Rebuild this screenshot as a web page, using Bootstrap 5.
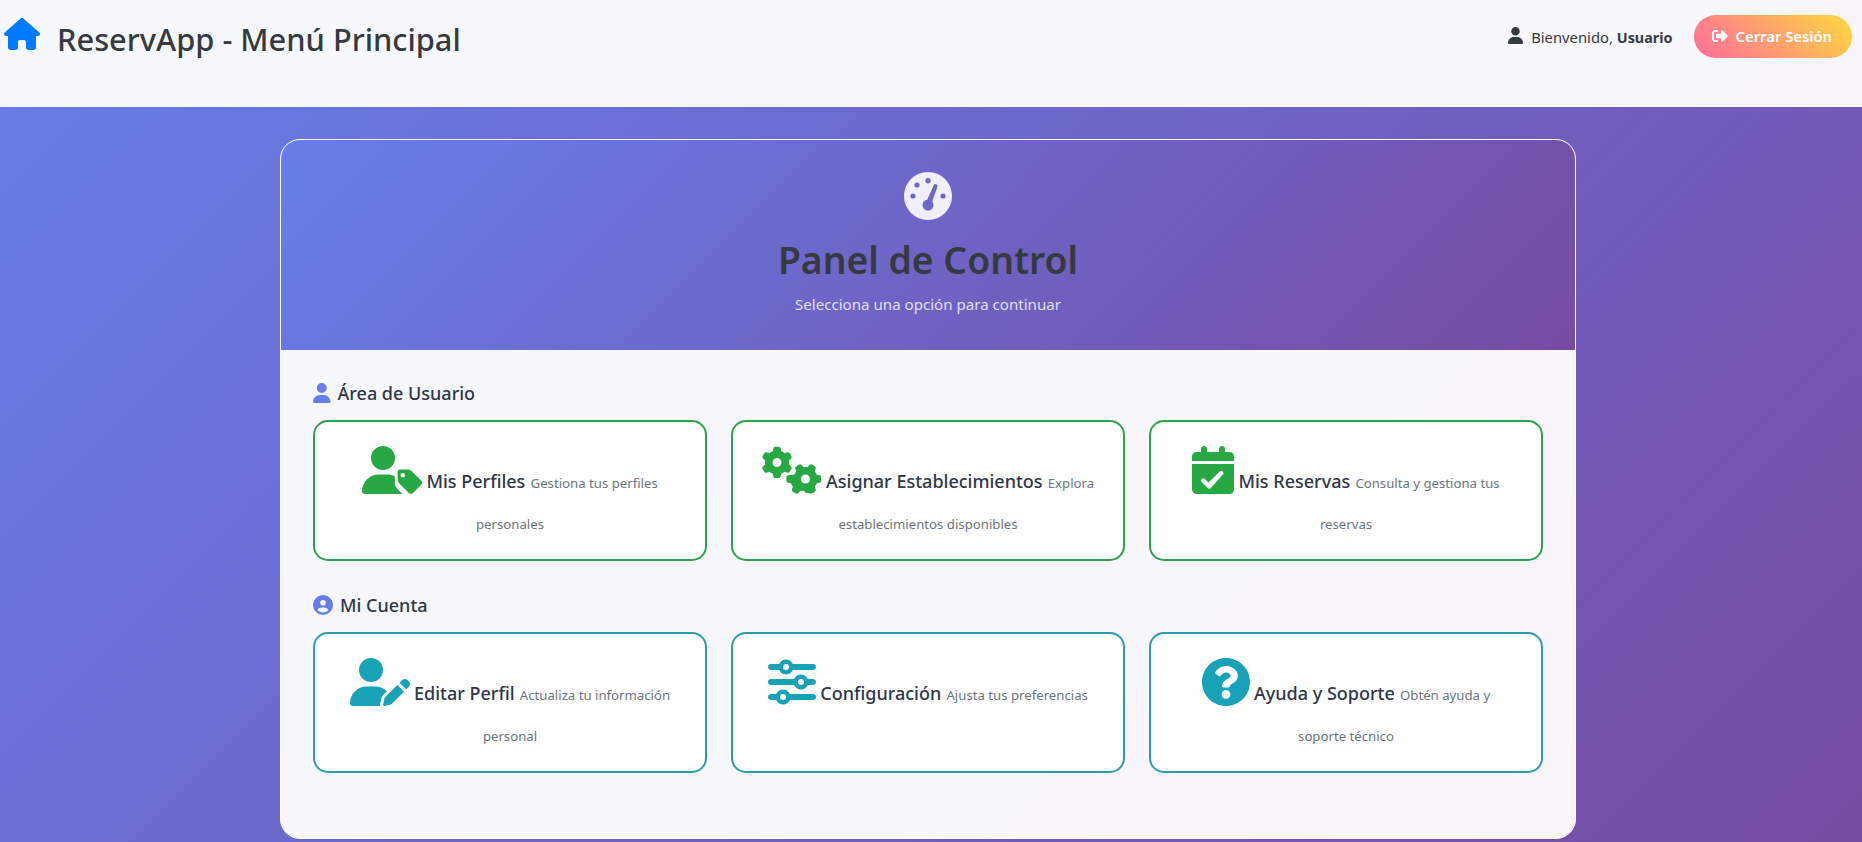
<!DOCTYPE html>
<html lang="es">
<head>
<meta charset="utf-8">
<title>ReservApp</title>
<link href="https://cdn.jsdelivr.net/npm/bootstrap@5.3.0/dist/css/bootstrap.min.css" rel="stylesheet">
<style>
html,body{height:842px;overflow:hidden}
body{font-family:"Noto Sans","Open Sans",sans-serif;background:linear-gradient(135deg,#667eea 0%,#764ba2 100%);color:#212529}
.topbar{height:107px;background:rgba(255,255,255,.95);padding:15px 10px 0 4px;align-items:flex-start}
.brandmark{color:#343a40;font-size:30.8px;font-weight:500;line-height:46px;text-decoration:none;margin-top:1px}
.brandmark svg{width:36px;height:32px;fill:#007bff;margin-right:17px;vertical-align:1px}
.greet{font-size:14.8px;color:#343a40;margin-right:21px;line-height:45px}
.greet svg{width:15px;height:17px;fill:#343a40;margin-right:8px;vertical-align:-1px}
.greet b{font-weight:700;font-size:14.4px}
.logout{height:43px;border-radius:25px;border:0;padding:0 20px 0 18px;color:#fff;font-weight:600;font-size:14.8px;background:linear-gradient(45deg,#ff6b9d,#ffd93d)}
.logout:hover{color:#fff}
.logout svg{width:16px;height:16px;fill:#fff;margin-right:8px;vertical-align:-2px}
.panel{width:1296px;margin:32px 0 0 280px;height:700px;border-radius:20px;border:1px solid #fff;background:rgba(255,255,255,.95);overflow:hidden}
.panelhead{height:210px;padding-top:32px;background:linear-gradient(135deg,#667eea,#764ba2);text-align:center}
.panelhead svg{width:48px;height:48px;display:block;margin:0 auto 10px}
.panelhead h1{font-size:37.3px;font-weight:600;color:#343a40;line-height:60px;margin:0 0 3px}
.panelhead p{font-size:15.1px;color:rgba(255,255,255,.8);margin:0}
.panelbody{padding:29px 32px 0}
.sectitle{font-size:18px;font-weight:500;color:#2d3748;line-height:28px;margin:0 0 13px 0}
.sectitle svg{fill:#667eea;height:20px;vertical-align:-3px;margin-right:7px}
.sectitle.second{margin-top:30px}
.actioncard{display:block;height:100%;background:#fff;border:2px solid #2ca24e;border-radius:15px;padding:24px 24px 15px;text-align:center;line-height:40px;text-decoration:none;font-size:16px}
.actioncard.teal{border-color:#2a9cae}
.actioncard svg{height:48px;fill:#28a745;vertical-align:-6px}
.actioncard.teal svg{fill:#17a2b8}
.cardname{font-size:18px;font-weight:500;color:#2d3748}
.carddesc{font-size:13.2px;color:#6c757d;margin-left:1px}
.cardsrow{--bs-gutter-x:24px;margin-left:-12px;margin-right:-12px}
</style>
</head>
<body>
<nav class="navbar topbar d-flex justify-content-between">
  <a class="brandmark" href="#"><svg viewBox="0 0 576 512"><path d="M575.8 255.5c0 18-15 32.1-32 32.1h-32l.7 160.2c0 2.7-.2 5.4-.5 8.1V472c0 22.1-17.9 40-40 40H456c-1.1 0-2.2 0-3.3-.1c-1.4 .1-2.8 .1-4.2 .1H416 392c-22.1 0-40-17.9-40-40V448 384c0-17.7-14.3-32-32-32H256c-17.7 0-32 14.3-32 32v64 24c0 22.1-17.9 40-40 40H160 128.1c-1.5 0-3-.1-4.5-.2c-1.2 .1-2.4 .2-3.6 .2H104c-22.1 0-40-17.9-40-40V360c0-.9 0-1.9 .1-2.8V287.6H32c-18 0-32-14-32-32.1c0-9 3-17 10-24L266.4 8c7-7 15-8 22-8s15 2 21 7L564.8 231.5c8 7 12 15 11 24z"/></svg>ReservApp - Menú Principal</a>
  <div class="d-flex align-items-start">
    <span class="greet"><svg viewBox="0 0 448 512"><path d="M224 256A128 128 0 1 0 224 0a128 128 0 1 0 0 256zm-45.7 48C79.8 304 0 383.8 0 482.3C0 498.7 13.3 512 29.7 512H418.3c16.4 0 29.7-13.3 29.7-29.7C448 383.8 368.2 304 269.7 304H178.3z"/></svg>Bienvenido, <b>Usuario</b></span>
    <button class="btn logout" type="button"><svg viewBox="0 0 512 512"><path d="M497 273L329 441c-15 15-41 4.5-41-17v-96H152c-13.3 0-24-10.7-24-24v-96c0-13.3 10.7-24 24-24h136V88c0-21.4 25.9-32 41-17l168 168c9.3 9.4 9.3 24.6 0 34zM192 436v-40c0-6.6-5.4-12-12-12H96c-17.7 0-32-14.3-32-32V160c0-17.7 14.3-32 32-32h84c6.6 0 12-5.4 12-12V76c0-6.6-5.4-12-12-12H96c-53 0-96 43-96 96v192c0 53 43 96 96 96h84c6.6 0 12-5.4 12-12z"/></svg>Cerrar Sesión</button>
  </div>
</nav>
<main class="panel">
  <header class="panelhead">
    <svg viewBox="0 0 48 48"><defs><mask id="gm"><rect width="48" height="48" fill="#fff"/><g fill="#000"><circle cx="24" cy="8.7" r="2.6"/><circle cx="13" cy="13" r="2.6"/><circle cx="9" cy="24" r="2.6"/><circle cx="39" cy="24" r="2.6"/><circle cx="24" cy="33" r="5.5"/><path d="M21.5 31.5 29.6 13.5a2 2 0 0 1 3.8 1.4L27 33z"/></g></mask></defs><circle cx="24" cy="24" r="24" fill="#fff" fill-opacity=".9" mask="url(#gm)"/></svg>
    <h1>Panel de Control</h1>
    <p>Selecciona una opción para continuar</p>
  </header>
  <div class="panelbody">
    <h2 class="sectitle"><svg viewBox="0 0 448 512"><path d="M224 256A128 128 0 1 0 224 0a128 128 0 1 0 0 256zm-45.7 48C79.8 304 0 383.8 0 482.3C0 498.7 13.3 512 29.7 512H418.3c16.4 0 29.7-13.3 29.7-29.7C448 383.8 368.2 304 269.7 304H178.3z"/></svg>Área de Usuario</h2>
    <div class="row cardsrow">
      <div class="col-4"><a class="actioncard" href="#"><svg viewBox="0 0 640 512"><path d="M224 256A128 128 0 1 0 224 0a128 128 0 1 0 0 256zm-45.7 48C79.8 304 0 383.8 0 482.3 0 498.7 13.3 512 29.7 512H435c-8-3-14-7-20-13l-45-55c-14-14-20-32-20-50v-69c-25-14-52-21-80-21H178.3z"/><path fill-rule="evenodd" d="M408 250h78c17 0 33 7 45 19l100 100c12 12 12 32 0 44l-87 87c-12 12-33 12-45 0l-100-100c-12-12-19-28-19-45v-73c0-18 10-32 28-32zm26 38a24 24 0 1 0 0 48 24 24 0 1 0 0-48z"/></svg> <span class="cardname">Mis Perfiles</span> <span class="carddesc">Gestiona tus perfiles personales</span></a></div>
      <div class="col-4"><a class="actioncard" href="#"><svg viewBox="0 0 640 512"><path d="M308.5 135.3c7.1-6.3 9.9-16.2 6.2-25c-2.3-5.3-4.8-10.5-7.6-15.5L304 89.4c-3-5-6.3-9.9-9.8-14.6c-5.7-7.6-15.7-10.1-24.7-7.1l-28.2 9.3c-10.7-8.8-23-16-36.2-20.9L199 27.1c-1.9-9.3-9.1-16.7-18.5-17.8C173.9 8.4 167.2 8 160.4 8h-.7c-6.8 0-13.5 .4-20.1 1.2c-9.4 1.1-16.6 8.6-18.5 17.8L115 56.1c-13.3 5-25.5 12.1-36.2 20.9L50.5 67.8c-9-3-19-.5-24.7 7.1c-3.5 4.7-6.8 9.6-9.9 14.6l-3 5.3c-2.8 5-5.3 10.2-7.6 15.6c-3.7 8.7-.9 18.6 6.2 25l22.2 19.8C32.6 161.9 32 168.9 32 176s.6 14.1 1.7 20.9L11.5 216.7c-7.1 6.3-9.9 16.2-6.2 25c2.3 5.3 4.8 10.5 7.6 15.6l3 5.2c3 5.1 6.3 9.9 9.9 14.6c5.7 7.6 15.7 10.1 24.7 7.1l28.2-9.3c10.7 8.8 23 16 36.2 20.8l6.1 29.1c1.9 9.3 9.1 16.7 18.5 17.8c6.7 .8 13.5 1.2 20.4 1.2s13.7-.4 20.4-1.2c9.4-1.1 16.6-8.6 18.5-17.8l6.1-29.1c13.3-5 25.5-12 36.2-20.8l28.2 9.3c9 3 19 .5 24.7-7.1c3.5-4.7 6.8-9.5 9.8-14.6l3.1-5.4c2.8-5 5.3-10.2 7.6-15.5c3.7-8.7 .9-18.6-6.2-25l-22.2-19.8c1.1-6.8 1.7-13.8 1.7-20.9s-.6-14.1-1.7-20.9l22.2-19.8zM112 176a48 48 0 1 1 96 0 48 48 0 1 1 -96 0zM504.7 500.5c6.3 7.1 16.2 9.9 25 6.2c5.3-2.3 10.5-4.8 15.5-7.6l5.4-3.1c5-3 9.9-6.3 14.6-9.8c7.6-5.7 10.1-15.7 7.1-24.7l-9.3-28.2c8.8-10.7 16-23 20.9-36.2l29.1-6.1c9.3-1.9 16.7-9.1 17.8-18.5c.8-6.7 1.2-13.5 1.2-20.4s-.4-13.7-1.2-20.4c-1.1-9.4-8.6-16.6-17.8-18.5L583.9 307c-5-13.3-12.1-25.5-20.9-36.2l9.3-28.2c3-9 .5-19-7.1-24.7c-4.7-3.5-9.6-6.8-14.6-9.9l-5.3-3c-5-2.8-10.2-5.3-15.6-7.6c-8.7-3.7-18.6-.9-25 6.2l-19.8 22.2c-6.8-1.1-13.8-1.7-20.9-1.7s-14.1 .6-20.9 1.7l-19.8-22.2c-6.3-7.1-16.2-9.9-25-6.2c-5.3 2.3-10.5 4.8-15.6 7.6l-5.2 3c-5.1 3-9.9 6.3-14.6 9.9c-7.6 5.7-10.1 15.7-7.1 24.7l9.3 28.2c-8.8 10.7-16 23-20.8 36.2L279.1 313c-9.3 1.9-16.7 9.1-17.8 18.5c-.8 6.7-1.2 13.5-1.2 20.4s.4 13.7 1.2 20.4c1.1 9.4 8.6 16.6 17.8 18.5l29.1 6.1c5 13.3 12 25.5 20.8 36.2l-9.3 28.2c-3 9-.5 19 7.1 24.7c4.7 3.5 9.5 6.8 14.6 9.8l5.4 3.1c5 2.8 10.2 5.3 15.5 7.6c8.7 3.7 18.6 .9 25-6.2l19.8-22.2c6.8 1.1 13.8 1.7 20.9 1.7s14.1-.6 20.9-1.7l19.8 22.2zM464 304a48 48 0 1 1 0 96 48 48 0 1 1 0-96z"/></svg> <span class="cardname">Asignar Establecimientos</span> <span class="carddesc">Explora establecimientos disponibles</span></a></div>
      <div class="col-4"><a class="actioncard" href="#"><svg viewBox="0 0 448 512"><path d="M128 0c17.7 0 32 14.3 32 32V64H288V32c0-17.7 14.3-32 32-32s32 14.3 32 32V64h48c26.5 0 48 21.5 48 48v48H0V112C0 85.5 21.5 64 48 64H96V32c0-17.7 14.3-32 32-32zM0 192H448V464c0 26.5-21.5 48-48 48H48c-26.5 0-48-21.5-48-48V192zM329 305c9.4-9.4 9.4-24.6 0-33.9s-24.6-9.4-33.9 0l-119 119L137 351c-9.4-9.4-24.6-9.4-33.9 0s-9.4 24.6 0 33.9l64 64c9.4 9.4 24.6 9.4 33.9 0L329 305z"/></svg> <span class="cardname">Mis Reservas</span> <span class="carddesc">Consulta y gestiona tus reservas</span></a></div>
    </div>
    <h2 class="sectitle second"><svg viewBox="0 0 512 512"><path d="M399 384.2C376.9 345.8 335.4 320 288 320H224c-47.4 0-88.9 25.8-111 64.2c35.2 39.2 86.2 63.8 143 63.8s107.8-24.7 143-63.8zM0 256a256 256 0 1 1 512 0A256 256 0 1 1 0 256zm256 16a72 72 0 1 0 0-144 72 72 0 1 0 0 144z"/></svg>Mi Cuenta</h2>
    <div class="row cardsrow">
      <div class="col-4"><a class="actioncard teal" href="#"><svg viewBox="0 0 640 512"><path d="M224 256A128 128 0 1 0 224 0a128 128 0 1 0 0 256zm-45.7 48C79.8 304 0 383.8 0 482.3C0 498.7 13.3 512 29.7 512H322.8c-3.1-8.8-3.7-18.4-1.4-27.8l15-60.1c2.8-11.3 8.6-21.5 16.8-29.7l40.3-40.3c-32.1-31-75.7-50.1-123.9-50.1H178.3zm435.5-68.3c-15.6-15.6-40.9-15.6-56.6 0l-29.4 29.4 71 71 29.4-29.4c15.6-15.6 15.6-40.9 0-56.6l-14.4-14.4zM375.9 417c-4.1 4.1-7 9.2-8.4 14.9l-15 60.1c-1.4 5.5 .2 11.2 4.2 15.2s9.7 5.6 15.2 4.2l60.1-15c5.6-1.4 10.8-4.3 14.9-8.4L576.1 358.7l-71-71L375.9 417z"/></svg> <span class="cardname">Editar Perfil</span> <span class="carddesc">Actualiza tu información personal</span></a></div>
      <div class="col-4"><a class="actioncard teal" href="#"><svg viewBox="0 0 512 512"><path d="M0 416c0 17.7 14.3 32 32 32l54.7 0c12.3 28.3 40.5 48 73.3 48s61-19.7 73.3-48L480 448c17.7 0 32-14.3 32-32s-14.3-32-32-32l-246.7 0c-12.3-28.3-40.5-48-73.3-48s-61 19.7-73.3 48L32 384c-17.7 0-32 14.3-32 32zm128 0a32 32 0 1 1 64 0 32 32 0 1 1 -64 0zM320 256a32 32 0 1 1 64 0 32 32 0 1 1 -64 0zm32-80c-32.8 0-61 19.7-73.3 48L32 224c-17.7 0-32 14.3-32 32s14.3 32 32 32l246.7 0c12.3 28.3 40.5 48 73.3 48s61-19.7 73.3-48l54.7 0c17.7 0 32-14.3 32-32s-14.3-32-32-32l-54.7 0c-12.3-28.3-40.5-48-73.3-48zM192 128a32 32 0 1 1 0-64 32 32 0 1 1 0 64zm73.3-64C253 35.7 224.8 16 192 16s-61 19.7-73.3 48L32 64C14.3 64 0 78.3 0 96s14.3 32 32 32l86.7 0c12.3 28.3 40.5 48 73.3 48s61-19.7 73.3-48L480 128c17.7 0 32-14.3 32-32s-14.3-32-32-32L265.3 64z"/></svg> <span class="cardname">Configuración</span> <span class="carddesc">Ajusta tus preferencias</span></a></div>
      <div class="col-4"><a class="actioncard teal" href="#"><svg viewBox="8 8 496 496"><path d="M504 256c0 136.997-111.043 248-248 248S8 392.997 8 256C8 119.083 119.043 8 256 8s248 111.083 248 248zM262.655 90c-54.497 0-89.255 22.957-116.549 63.758-3.536 5.286-2.353 12.415 2.715 16.258l34.699 26.31c5.205 3.947 12.621 3.008 16.665-2.122 17.864-22.658 30.113-35.797 57.303-35.797 20.429 0 45.698 13.148 45.698 32.958 0 14.976-12.363 22.667-32.534 33.976C247.128 238.528 216 254.941 216 296v4c0 6.627 5.373 12 12 12h56c6.627 0 12-5.373 12-12v-1.333c0-28.462 83.186-29.647 83.186-106.667 0-58.002-60.165-102-116.531-102zM256 338c-25.365 0-46 20.635-46 46 0 25.364 20.635 46 46 46s46-20.636 46-46c0-25.365-20.635-46-46-46z"/></svg> <span class="cardname">Ayuda y Soporte</span> <span class="carddesc">Obtén ayuda y soporte&nbsp;técnico</span></a></div>
    </div>
  </div>
</main>
<script src="https://cdn.jsdelivr.net/npm/bootstrap@5.3.0/dist/js/bootstrap.bundle.min.js"></script>
</body>
</html>
